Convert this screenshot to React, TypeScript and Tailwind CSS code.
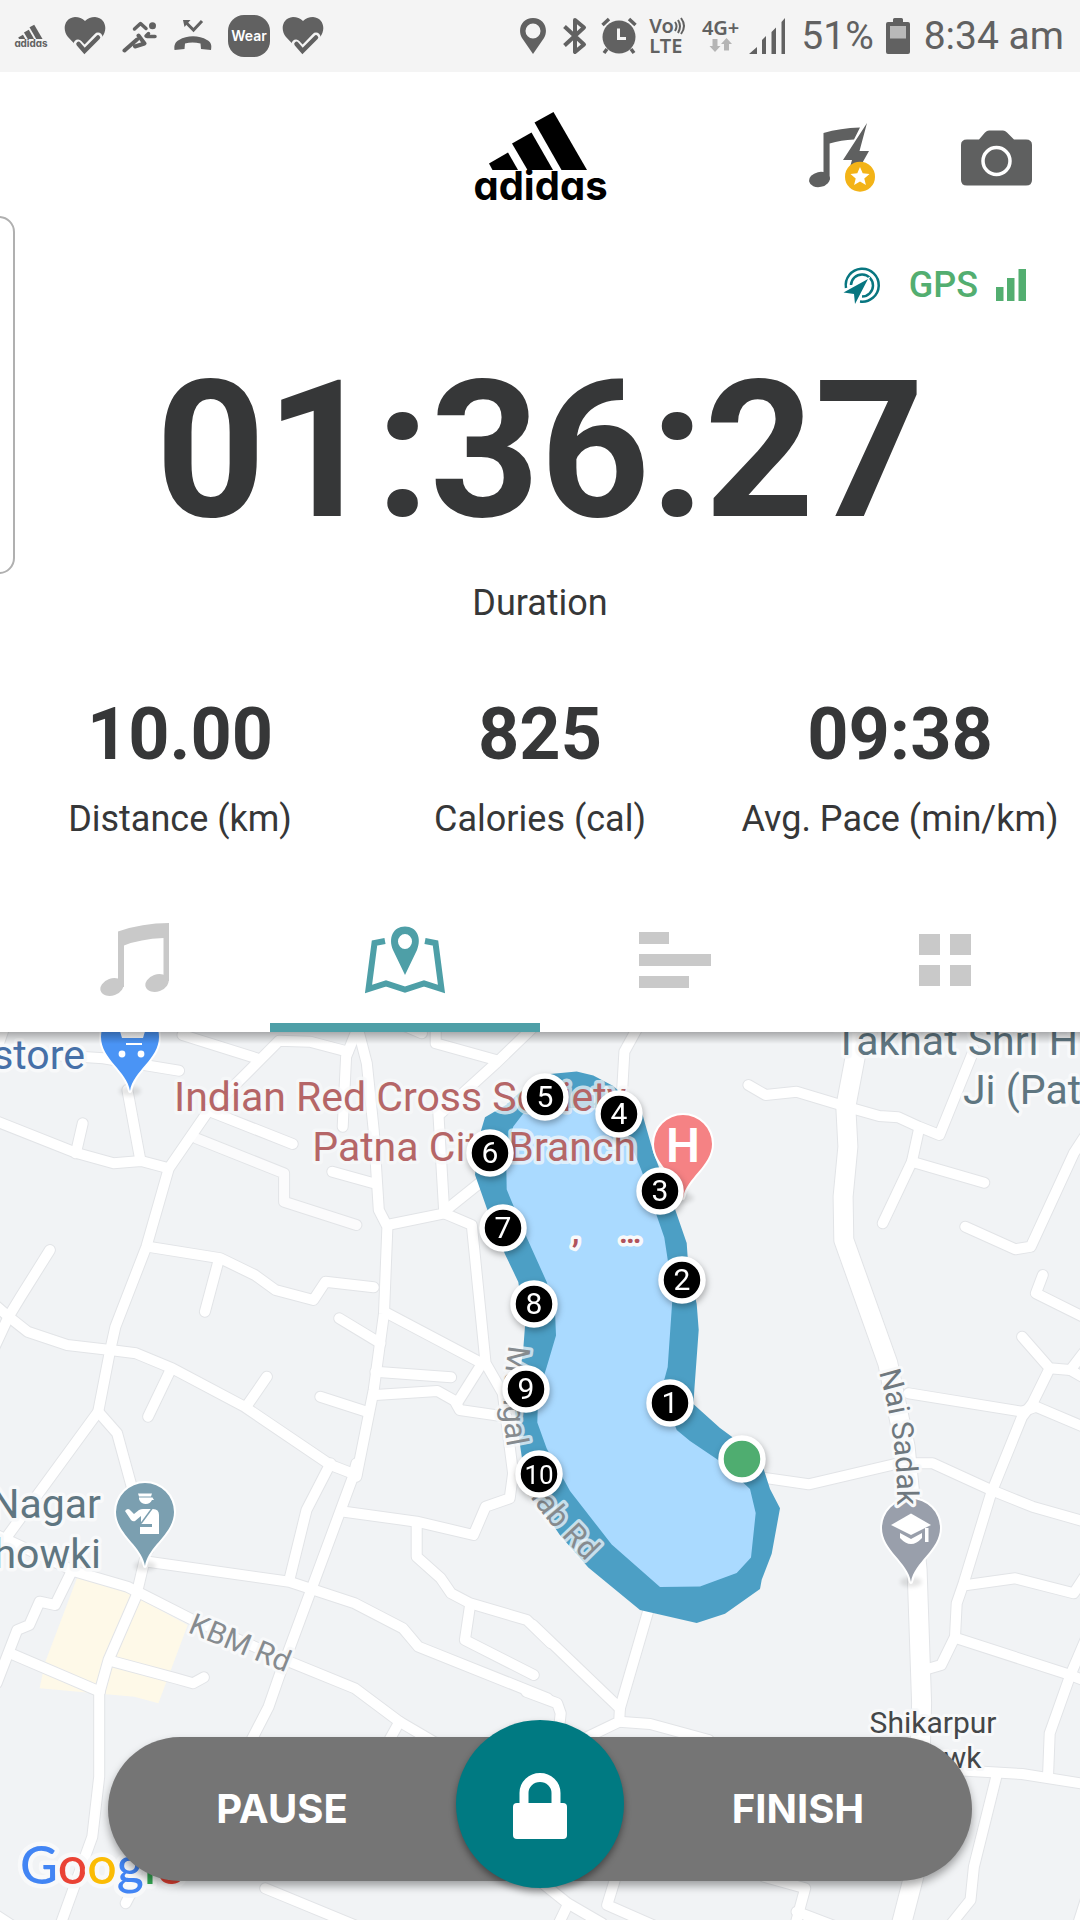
import React from "react";

type Pt = [number, number];
type Sheet = { ox: number; oy: number; sx: number; sy: number };

/* Survey sheets: each road is digitised in the units of its own sheet. */
const NW: Sheet = { ox: 0, oy: -2, sx: 540 / 1568, sy: 1 / 3 };
const NE: Sheet = { ...NW, ox: 540 };
const SW: Sheet = { ...NW, oy: 438 };
const SE: Sheet = { ...NW, ox: 540, oy: 438 };
const LAKE: Sheet = { ox: 460, oy: 28, sx: 1 / 3, sy: 580 / 1568 };

const toPoints = (s: Sheet, pts: Pt[]) =>
  pts.map(([x, y]) => `${(s.ox + x * s.sx).toFixed(1)},${(s.oy + y * s.sy).toFixed(1)}`).join(" ");

const minorRoads: [Sheet, Pt[]][] = [
  [NW, [[-20, 270], [225, 370], [330, 400], [410, 393], [490, 415]]],
  [NW, [[370, 180], [408, 393]]],
  [NW, [[240, 280], [220, 370]]],
  [NW, [[1010, 65], [900, 35], [810, 32], [745, 100], [600, 250], [550, 325], [490, 415], [425, 650], [335, 890], [320, 960], [285, 1145], [20, 1520]]],
  [NW, [[530, 15], [745, 85]]],
  [NW, [[150, 75], [300, 85], [520, 122]]],
  [NW, [[-10, 60], [10, 0]]],
  [NW, [[600, 240], [850, 342]]],
  [NW, [[1040, -10], [1005, 80], [995, 290]]],
  [NW, [[1040, 0], [1065, 100], [1085, 300], [1100, 540], [1125, 590], [1115, 850], [1085, 1080], [1035, 1340]]],
  [NW, [[1125, 585], [1290, 550], [1270, 200]]],
  [NW, [[1290, 550], [1370, 585], [1410, 1000], [1460, 1090], [1490, 1330], [1480, 1405], [1410, 1430], [1375, 1515], [1210, 1475], [1000, 1445]]],
  [NW, [[1295, 540], [1440, 420]]],
  [NW, [[1265, -10], [1265, 40], [1440, 90]]],
  [NW, [[1550, -10], [1440, 100], [1280, 250]]],
  [NW, [[1180, -10], [1225, 10]]],
  [NW, [[965, 425], [1085, 460]]],
  [NW, [[430, 650], [640, 685], [740, 735], [800, 780], [910, 810], [945, 755], [1085, 772]]],
  [NW, [[635, 690], [595, 845]]],
  [NW, [[985, 865], [1105, 940]]],
  [NW, [[1125, 850], [1400, 1000], [1330, 1115]]],
  [NW, [[1090, 1025], [1310, 1042]]],
  [NW, [[1090, 1095], [1270, 1083], [1320, 1112], [1335, 1140], [1470, 1160]]],
  [NW, [[930, 1100], [1065, 1145]]],
  [NW, [[-20, 820], [25, 860], [80, 905], [195, 945], [320, 960], [395, 970], [500, 1015], [710, 1130], [960, 1305], [1035, 1335]]],
  [NW, [[145, 660], [60, 800], [25, 860], [-20, 960]]],
  [NW, [[495, 1020], [430, 1160]]],
  [NW, [[775, 1040], [715, 1130]]],
  [NW, [[285, 1145], [340, 1210], [385, 1380], [430, 1560]]],
  [SW, [[420, 270], [395, 380], [315, 570], [288, 670], [288, 920], [268, 1100], [170, 1380]]],
  [SW, [[-20, 190], [220, 305], [370, 350], [560, 450], [840, 575], [1030, 655], [1160, 755], [1300, 840]]],
  [SW, [[210, 300], [160, 405], [115, 395], [85, 465], [50, 480], [-10, 640]]],
  [SW, [[30, 550], [290, 665]]],
  [SW, [[330, 575], [510, 625], [560, 640], [592, 622]]],
  [SW, [[430, 275], [840, 335], [1030, 400], [1170, 475], [1215, 530], [1590, 685]]],
  [SW, [[960, -20], [890, 120], [840, 330]]],
  [SW, [[1035, -20], [1025, 20], [900, 370], [810, 620], [780, 710], [720, 830]]],
  [SW, [[1210, 160], [1210, 260], [1280, 325], [1310, 370], [1365, 400], [1530, 450], [1600, 520]]],
  [SW, [[1365, 405], [1350, 510], [1550, 615]]],
  [SW, [[1160, 755], [1120, 830]]],
  [SW, [[365, 1300], [400, 1230]]],
  [SW, [[770, 1255], [1040, 1370]]],
  [SW, [[-20, 1330], [40, 1370]]],
  [NE, [[290, -20], [245, 65], [238, 190]]],
  [NE, [[605, 165], [655, 195], [745, 185], [890, 230], [985, 258], [1040, 262], [1100, 290], [1160, 315], [1260, 60]]],
  [NE, [[1100, 300], [1080, 395], [995, 580]]],
  [NE, [[1080, 395], [1290, 458]]],
  [NE, [[1600, 290], [1550, 370], [1425, 650], [1380, 658], [1235, 590]]],
  [NE, [[1460, 735], [1440, 790], [1600, 872]]],
  [NE, [[1400, 920], [1480, 1015], [1540, 1020], [1600, 1055]]],
  [NE, [[1540, 1020], [1600, 940]]],
  [NE, [[1480, 1015], [1430, 1120], [1400, 1160], [1310, 1390], [1230, 1660], [1210, 1720], [1205, 1820], [1165, 1905], [1115, 1920]]],
  [NE, [[1070, 1090], [1400, 1145], [1440, 1130], [1600, 1200]]],
  [NE, [[640, 1342], [780, 1363], [1040, 1300], [1140, 1300], [1310, 1380], [1430, 1430], [1600, 1480]]],
  [SE, [[1240, 345], [1380, 325], [1550, 370], [1600, 290]]],
  [SE, [[1210, 505], [1540, 615], [1600, 640]]],
  [SE, [[1600, 470], [1540, 615], [1480, 790], [1475, 920]]],
  [SE, [[1200, 900], [1400, 912], [1600, 945]]],
  [SE, [[1325, 920], [1260, 1190], [1250, 1290], [1180, 1380]]],
  [SE, [[-20, 465], [232, 715], [315, 420]]],
  [SE, [[232, 715], [230, 755], [120, 810]]],
  [SE, [[230, 755], [320, 762], [490, 810]]],
  [SE, [[-40, 665], [50, 700], [60, 730], [55, 780]]],
  [SE, [[-40, 1200], [80, 1300], [180, 1360]]],
  [SE, [[220, 1220], [195, 1305], [360, 1380]]],
  [SE, [[80, 1305], [50, 1370]]],
  [SE, [[650, 1220], [770, 1255], [740, 1370]]],
  [SE, [[745, 1325], [860, 1370]]],
  [SE, [[1560, 1370], [1600, 1240]]],
];

const mainRoad: [Sheet, Pt[]] = [
  NE,
  [[930, 0], [888, 230], [894, 350], [880, 500], [882, 630], [1010, 1000], [1060, 1250], [1095, 1620], [1108, 2020], [1095, 2500], [1040, 2720]],
];

const parks: Pt[][] = [[[225, 320], [375, 370], [545, 465], [460, 700], [390, 680], [115, 655], [130, 580]]];

const routeOuter: Pt[] = [
  [270, 38], [350, 31], [400, 42], [460, 70], [545, 140], [580, 250], [640, 390], [680, 495], [685, 560], [710, 660], [716, 730],
  [700, 930], [780, 995], [900, 1075], [930, 1160], [960, 1212], [935, 1335], [905, 1405], [900, 1430], [795, 1497],
  [710, 1522], [540, 1487], [385, 1372], [300, 1285], [240, 1205], [190, 1100], [165, 950], [190, 780], [195, 720],
  [175, 600], [135, 525], [80, 400], [45, 310], [60, 200], [75, 155], [140, 120], [200, 70],
];
const lakeShore: Pt[] = [
  [270, 130], [420, 130], [500, 200], [545, 300], [590, 420], [613, 480], [625, 550], [637, 650], [623, 830], [605, 890],
  [650, 1000], [690, 1030], [780, 1085], [870, 1160], [887, 1225], [873, 1345], [830, 1387], [720, 1423], [600, 1425],
  [455, 1310], [330, 1165], [260, 1050], [232, 980], [235, 900], [260, 830], [288, 745], [285, 680], [260, 600],
  [200, 480], [140, 350], [138, 240], [160, 180], [190, 145],
];

const kmMarkers: [string, number, number][] = [
  ["1", 670, 371], ["2", 682, 248], ["3", 660, 159], ["4", 619, 82], ["5", 545, 65],
  ["6", 490, 121], ["7", 503, 196], ["8", 534, 272], ["9", 526, 357], ["10", 539, 442],
];

const PIN = "M0 0C-3-20-29-32-29-54A29 29 0 0 1 29-54C29-32 3-20 0 0Z";

function Pin({ x, y, fill }: { x: number; y: number; fill: string }) {
  return (
    <g transform={`translate(${x} ${y})`}>
      <ellipse cx="0" cy="0" rx="11" ry="5" fill="#000" className="opacity-10 blur-[2px]" />
      <path d={PIN} fill={fill} stroke="#fff" strokeWidth="4" paintOrder="stroke" strokeLinejoin="round" />
    </g>
  );
}

const halo = "[paint-order:stroke] stroke-[#f8f9fa] [stroke-linejoin:round]";

function RunMap() {
  return (
    <svg
      className="absolute inset-0 h-full w-full"
      viewBox="0 0 1080 888"
      preserveAspectRatio="xMidYMid slice"
      role="img"
      aria-label="Map of the current run"
      fontFamily="Roboto, sans-serif"
    >
      <rect width="1080" height="888" fill="#f1f3f5" />
      {parks.map((p, i) => (
        <polygon key={i} points={toPoints(SW, p)} fill="#fef9e8" />
      ))}
      <g fill="none" strokeLinejoin="round" strokeLinecap="round">
        <g stroke="#e2e4e7" strokeWidth="12">
          {minorRoads.map(([s, p], i) => (
            <polyline key={i} points={toPoints(s, p)} />
          ))}
          <polyline points={toPoints(NW, [[570, 325], [825, 430], [825, 515], [1035, 585]])} />
        </g>
        <polyline points={toPoints(...mainRoad)} stroke="#e2e4e7" strokeWidth="21" />
        <polyline points={toPoints(NW, [[570, 325], [825, 430], [825, 515], [1035, 585]])} stroke="#fbfbfc" strokeWidth="10" />
        <g stroke="#fff" strokeWidth="10">
          {minorRoads.map(([s, p], i) => (
            <polyline key={i} points={toPoints(s, p)} />
          ))}
        </g>
        <polyline points={toPoints(...mainRoad)} stroke="#fff" strokeWidth="19" />
      </g>

      <Pin x={130} y={59} fill="#4a94f5" />
      <path d="M119 -4h27l-3 10h-21z" fill="#fff" />
      <path d="M126 12h16" stroke="#fff" strokeWidth="2" />
      <circle cx="122" cy="22" r="3.4" fill="#fff" />
      <circle cx="141" cy="22" r="3.4" fill="#fff" />

      <polygon points={toPoints(LAKE, routeOuter)} fill="#4c9fc5" />
      <polygon points={toPoints(LAKE, lakeShore)} fill="#aadaff" />

      <Pin x={683} y={166} fill="#f58284" />
      <text x="683" y="130" fontSize="48" fontWeight="600" textAnchor="middle" fill="#fff">H</text>

      <Pin x={145} y={534} fill="#7b9fb0" />
      <g fill="#fff">
        <path d="M138 461.500h14l-1 3h-12z" />
        <path d="M139 465.500h13.500l1.500 2.500h-2a7 7 0 0 1-13-1z" />
        <path d="M125 479q3-4 6 0l3 3 5-4q2-1 4-1h10q6 0 6 6v19h-19v-7h12v-3h-11v-8l-6 5q-2 1-4-1z" />
      </g>
      <path d="M152 476.500l-11 15" stroke="#7b9fb0" strokeWidth="1.500" />

      <Pin x={911} y={550} fill="#999fab" />
      <g fill="#fff">
        <path d="M891 493l20-11.500 20 11.500-20 10z" />
        <path d="M900 501l11 6 11-6v5q-11 12-22 0z" />
        <path d="M925 496h3.500v14h-3.500z" />
      </g>

      <g fontSize="41" strokeWidth="7" className={halo}>
        <text x="85" y="37" textAnchor="end" fill="#4670a8">store</text>
        <g fill="#b56667" strokeOpacity="0.7">
          <text x="174" y="79">Indian Red Cross Society</text>
          <text x="636" y="129" textAnchor="end">Patna City Branch</text>
        </g>
        <g fill="#5f7681">
          <text x="834" y="23">Takhat Shri H</text>
          <text x="963" y="72">Ji (Pat</text>
          <text x="101" y="486" textAnchor="end">Nagar</text>
          <text x="101" y="536" textAnchor="end">howki</text>
        </g>
      </g>
      <g fontSize="30" fontWeight="700" strokeWidth="7" fill="#b0535c" className={halo}>
        <text x="572" y="211">,</text>
        <text x="619" y="211">…</text>
      </g>
      <g fontSize="30" strokeWidth="6" fill="#444749" className={halo}>
        <text x="933" y="701" textAnchor="middle">Shikarpur</text>
        <text x="936" y="736" textAnchor="middle">Chowk</text>
      </g>
      <defs>
        <path id="talab" d="M509 313C501 365 500 410 518 445S572 517 620 562" />
        <path id="sadak" d="M879 340C892 385 899 430 897 500" />
        <path id="kbm" d="M187 600L299 646" />
      </defs>
      <g fontSize="31" strokeWidth="6" fill="#868b8f" className={halo}>
        <text strokeOpacity="0.72">
          <textPath href="#talab">
            Mangal <tspan dx="14">Talab Rd</tspan>
          </textPath>
        </text>
        <text fontSize="30" fill="#6f787e"><textPath href="#sadak">Nai Sadak</textPath></text>
        <text fontSize="30"><textPath href="#kbm">KBM Rd</textPath></text>
      </g>

      <g className="drop-shadow-[1px_3px_3px_rgba(0,0,0,0.3)]">
        {kmMarkers.map(([label, x, y]) => (
          <g key={label}>
            <circle cx={x} cy={y} r="21" fill="#000" stroke="#fff" strokeWidth="5.5" />
            <text x={x} y={y + 10} fontSize={label.length > 1 ? 26 : 30} textAnchor="middle" fill="#fff">{label}</text>
          </g>
        ))}
        <circle cx="742" cy="427" r="21" fill="#4fad70" stroke="#fff" strokeWidth="5.5" />
      </g>

      <text x="20" y="852" fontFamily="Lato, sans-serif" fontWeight="500" fontSize="52" strokeWidth="9" className={halo}>
        <tspan fill="#4285f4">G</tspan>
        <tspan fill="#ea4335">o</tspan>
        <tspan fill="#fbbc05">o</tspan>
        <tspan fill="#4285f4">g</tspan>
        <tspan fill="#34a853">l</tspan>
        <tspan fill="#ea4335">e</tspan>
      </text>
    </svg>
  );
}

function AdidasLogo({ className, fill }: { className: string; fill: string }) {
  return (
    <svg className={className} viewBox="472 112 137 91" fill={fill} role="img" aria-label="adidas">
      <path d="M489 163.500L508 152.500L518 170H492.500Z" />
      <path d="M512 143.500L531.500 132.500L553 170H527.500Z" />
      <path d="M534.500 122.500L553.500 112L587 170H561.500Z" />
      <text
        x="540.500" y="200" fontFamily="Inter, sans-serif" fontSize="40" fontWeight="700" textAnchor="middle"
        className="[font-feature-settings:'cv11']"
      >
        adidas
      </text>
    </svg>
  );
}

function HeartCheck() {
  return (
    <svg className="h-[39px] w-[42px]" viewBox="0 0 42 39" aria-hidden="true">
      <path d="M21 38L4 20C-2 13 0 1 11 0Q17 0 21 4Q25 0 31 0C42 1 44 13 38 20Z" fill="#616161" />
      <path d="M14 27L20.500 34L34 20" stroke="#f4f4f4" strokeWidth="9" fill="none" strokeLinejoin="round" strokeLinecap="round" />
      <path d="M14.500 27L20.500 34L34 20.500" stroke="#616161" strokeWidth="4.500" fill="none" strokeLinecap="round" />
    </svg>
  );
}

function StatusBar() {
  return (
    <header className="flex h-[72px] items-center justify-between bg-[#f4f4f4] pr-4 pl-3.5 text-[#616161]">
      <div className="flex items-center gap-4">
        <AdidasLogo className="h-6 w-[34px]" fill="#616161" />
        <HeartCheck />
        <svg className="h-[34px] w-[36px]" viewBox="0 0 36 34" fill="none" stroke="#616161" strokeWidth="4" strokeLinecap="round" strokeLinejoin="round" aria-hidden="true">
          <circle cx="30.500" cy="6.700" r="3.500" fill="#616161" stroke="none" />
          <path d="M12.500 10L18.500 4.500L24 9.500" strokeWidth="3.500" />
          <path d="M25 17.500H33M24 17L26.500 14.500" strokeWidth="3.500" />
          <path d="M2.500 31.500L15 20.500M16.500 16.500L22.500 24.500L13 27.500" />
        </svg>
        <svg className="h-9 w-[38px]" viewBox="0 0 38 36" fill="#616161" aria-hidden="true">
          <path d="M.5 32C0 27 1 24 5 22C13 17 25 17 33 22C37 24 38 27 37 32L27 31L26.500 25.500C21 24 16 24 11 25.500L10.500 31Z" />
          <path d="M28 3L19.500 12L12 4.500" stroke="#616161" strokeWidth="3" fill="none" />
          <path d="M9 2H16.500L10.500 9Z" />
        </svg>
        <span className="flex h-[42px] w-[42px] items-center justify-center rounded-2xl bg-[#616161] font-['Inter'] text-sm font-semibold text-white">
          Wear
        </span>
        <span className="-ml-1">
          <HeartCheck />
        </span>
      </div>
      <div className="flex items-center font-['Roboto']">
        <svg className="mr-4 h-9 w-7" viewBox="0 0 28 36" aria-hidden="true">
          <path fillRule="evenodd" fill="#616161" d="M14 36L3 20C-2 11 3 0 14 0S30 11 25 20ZM14 5.500A7.500 7.500 0 1 0 14 20.500A7.500 7.500 0 1 0 14 5.500Z" />
        </svg>
        <svg className="mr-3.5 h-[38px] w-6" viewBox="0 0 24 38" fill="none" stroke="#616161" strokeWidth="4" strokeLinejoin="round" aria-hidden="true">
          <path d="M1.500 9.500L21 27.500L12 35V3L21 10.500L1.500 28.500" />
        </svg>
        <svg className="mr-3 h-[38px] w-9" viewBox="0 0 36 38" aria-hidden="true">
          <circle cx="18" cy="20" r="16.500" fill="#616161" />
          <path d="M1.500 8L8 2M34.500 8L28 2M6 32L3 36M30 32L33 36" stroke="#616161" strokeWidth="3.500" />
          <path d="M17.500 11.500V21.500H25" stroke="#f4f4f4" strokeWidth="3" fill="none" />
        </svg>
        <div className="mr-4 flex flex-col font-['Noto_Sans'] text-xl leading-5 font-semibold">
          <span className="flex items-center">
            Vo
            <svg className="h-5 w-3" viewBox="0 0 12 20" fill="none" stroke="#616161" strokeWidth="2" aria-hidden="true">
              <path d="M1 6Q4 10 1 15M4 4Q8 10 4 17M7 2Q13 10 7 18" />
            </svg>
          </span>
          <span>LTE</span>
        </div>
        <div className="mr-2.5 flex flex-col items-center font-['Noto_Sans'] text-xl leading-5 font-semibold">
          4G+
          <svg className="h-4 w-6" viewBox="0 0 24 16" fill="#b5b5b5" aria-hidden="true">
            <path d="M3.500 1H8.500V8H11.500L6 14L.5 8H3.500ZM15 12.500H20V6H23L17.500 0L12 6H15Z" />
          </svg>
        </div>
        <svg className="mr-4 h-9 w-9" viewBox="0 0 36 36" fill="#616161" aria-hidden="true">
          <path d="M0 36L8 29V36ZM13 36V22L17 18V36ZM22.500 36V14L27 9.500V36ZM32.500 36V4L36 0V36Z" />
        </svg>
        <span className="mr-3 text-[39px] leading-none">51%</span>
        <svg className="mr-3.5 h-9 w-6" viewBox="0 0 24 36" aria-hidden="true">
          <path d="M2 4H7V1.500Q7 0 8.500 0H15.500Q17 0 17 1.500V4H22Q24 4 24 6V34Q24 36 22 36H2Q0 36 0 34V6Q0 4 2 4Z" fill="#616161" />
          <rect x="4" y="8" width="16" height="12.500" fill="#b9b9b9" />
        </svg>
        <span className="text-[39px] leading-none">8:34 am</span>
      </div>
    </header>
  );
}

function Metric({ value, label }: { value: string; label: string }) {
  return (
    <div className="flex flex-col items-center">
      <dd className="text-[72px] leading-none font-bold">{value}</dd>
      <dt className="order-last mt-6 text-4xl leading-[48px] whitespace-nowrap">{label}</dt>
    </div>
  );
}

const tabs = [
  {
    name: "Music",
    active: false,
    icon: (
      <svg className="h-[74px] w-[70px]" viewBox="0 0 70 74" fill="#c9c9c9" aria-hidden="true">
        <path d="M18 60V8.500Q42 0 69 0V58H63.500V15Q40 16 24 22.500V64H18Z" />
        <ellipse cx="12" cy="64" rx="12" ry="8.500" transform="rotate(-20 12 64)" />
        <ellipse cx="57" cy="60" rx="12" ry="8.500" transform="rotate(-20 57 60)" />
      </svg>
    ),
  },
  {
    name: "Map",
    active: true,
    icon: (
      <svg className="h-[68px] w-20" viewBox="365 926 80 68" aria-hidden="true">
        <path fillRule="evenodd" fill="#4e9fa7" d="M405 975L393 950C388 938 393 926.500 405 926.500S422 938 417 950ZM405 934A7 7.500 0 1 0 405 949A7 7.500 0 1 0 405 934Z" />
        <path d="M385 941L374.500 943L368.500 989L386 983.500L405 989.500L424 983.500L441.500 989L435.500 943L425 941" fill="none" stroke="#4e9fa7" strokeWidth="6" />
      </svg>
    ),
  },
  {
    name: "Splits",
    active: false,
    icon: (
      <svg className="h-14 w-[72px]" viewBox="0 0 72 56" fill="#c9c9c9" aria-hidden="true">
        <path d="M0 0H30V12H0ZM0 22H72V34H0ZM0 44H50V56H0Z" />
      </svg>
    ),
  },
  {
    name: "Tiles",
    active: false,
    icon: (
      <svg className="h-[52px] w-[52px]" viewBox="0 0 52 52" fill="#c9c9c9" aria-hidden="true">
        <path d="M0 0H21V21H0ZM31 0H52V21H31ZM0 31H21V52H0ZM31 31H52V52H31Z" />
      </svg>
    ),
  },
];

export default function App() {
  return (
    <div className="relative flex min-h-screen flex-col overflow-hidden bg-white font-['Roboto',sans-serif] text-[#363738]">
      <StatusBar />
      <div aria-hidden="true" className="absolute top-[216px] -left-6 h-[358px] w-[39px] rounded-2xl border-2 border-[#b0b0b0]" />

      <div className="grid grid-cols-[1fr_auto_1fr] items-center pt-10 pr-12">
        <span />
        <AdidasLogo className="ml-12 h-[91px] w-[137px]" fill="#000" />
        <div className="flex items-center justify-end gap-[84px]">
          <button type="button" aria-label="Music playlist">
            <svg className="h-[70px] w-[68px]" viewBox="809 122 68 70" aria-hidden="true">
              <path d="M823.500 180V132Q840 127 860 126.500L854 138.500Q841 139 829.600 142.500V179Z" fill="#5f6060" />
              <ellipse cx="819.500" cy="178.500" rx="10.500" ry="7.500" transform="rotate(-12 819.500 178.500)" fill="#5f6060" />
              <path d="M867 122L859.500 150H869L860 166H850L852 159H843Z" fill="#5f6060" />
              <circle cx="860" cy="175.700" r="15" fill="#f3b317" />
              <path d="M860 166l2.700 6.300 6.800.6-5.200 4.500 1.600 6.700-5.900-3.600-5.900 3.600 1.600-6.700-5.200-4.500 6.800-.6z" fill="#fff" />
            </svg>
          </button>
          <button type="button" aria-label="Take photo">
            <svg className="h-14 w-[71px]" viewBox="0 0 71 56" aria-hidden="true">
              <path d="M6 9.500H18L24 2.500Q26 .5 28 .5H42Q44 .5 46 2.500L53 9.500H65Q71 9.500 71 15V50Q71 55.500 65 55.500H6Q0 55.500 0 50V15Q0 9.500 6 9.500Z" fill="#5f6060" />
              <circle cx="35.500" cy="31" r="13.500" fill="none" stroke="#fff" strokeWidth="3.500" />
            </svg>
          </button>
        </div>
      </div>

      <div className="mt-[60px] flex h-11 items-center justify-end pr-[54px] text-4xl font-medium text-[#53ae70]">
        <svg className="mr-7 h-[38px] w-[38px]" viewBox="844 266 38 38" aria-hidden="true">
          <g fill="none" stroke="#087680" strokeWidth="2.500">
            <path d="M847 288A16.500 16.500 0 1 1 861 301.500" />
            <path d="M852 285A11 11 0 1 1 863 296.500" />
          </g>
          <path d="M869 279L844.500 292.500L855 294L856 304Z" fill="#087680" stroke="#fff" strokeWidth="2" paintOrder="stroke" />
        </svg>
        GPS
        <svg className="ml-[18px] h-8 w-[30px]" viewBox="0 0 30 32" fill="#53ae70" aria-hidden="true">
          <path d="M0 18H7.500V32H0ZM11 9H18.500V32H11ZM22.500 0H30V32H22.500Z" />
        </svg>
      </div>

      <dl className="flex flex-col">
        <div className="mt-12 flex flex-col items-center">
          <dd className="text-[192px] leading-none font-bold">01:36:27</dd>
          <dt className="order-last mt-8 text-4xl leading-[48px]">Duration</dt>
        </div>
        <div className="mt-18 grid grid-cols-3">
          <Metric value="10.00" label="Distance (km)" />
          <Metric value="825" label="Calories (cal)" />
          <Metric value="09:38" label="Avg. Pace (min/km)" />
        </div>
      </dl>

      <nav className="mt-[45px] grid h-36 grid-cols-4" role="tablist">
        {tabs.map((t) => (
          <button
            key={t.name}
            type="button"
            role="tab"
            aria-label={t.name}
            aria-selected={t.active}
            className={
              t.active
                ? "flex items-center justify-center border-b-[9px] border-[#4e9fa7] pt-2"
                : "flex items-center justify-center"
            }
          >
            {t.icon}
          </button>
        ))}
      </nav>

      <main className="relative flex min-h-[600px] flex-1 flex-col justify-end overflow-hidden">
        <RunMap />
        <div aria-hidden="true" className="absolute inset-x-0 top-0 h-3 bg-linear-to-b from-black/30 to-transparent" />
        <div className="relative mx-[10%] mb-[39px] flex h-36 items-center justify-between rounded-full bg-[#757575] font-['Inter'] text-[40px] font-bold text-white shadow-[0_5px_8px_rgba(0,0,0,0.35)]">
          <button type="button" className="h-full flex-1">PAUSE</button>
          <button
            type="button"
            aria-label="Unlock controls"
            className="mb-2.5 flex h-[168px] w-[168px] shrink-0 items-center justify-center rounded-full bg-[#007a82] pt-1 shadow-[0_4px_7px_rgba(0,0,0,0.4)]"
          >
            <svg className="h-[66px] w-[54px]" viewBox="513 1774 54 66" aria-hidden="true">
              <rect x="513" y="1804" width="54" height="36" rx="4" fill="#fff" />
              <path d="M524 1808V1794A16 15.500 0 0 1 556 1794V1808" fill="none" stroke="#fff" strokeWidth="9" />
            </svg>
          </button>
          <button type="button" className="h-full flex-1">FINISH</button>
        </div>
      </main>
    </div>
  );
}
